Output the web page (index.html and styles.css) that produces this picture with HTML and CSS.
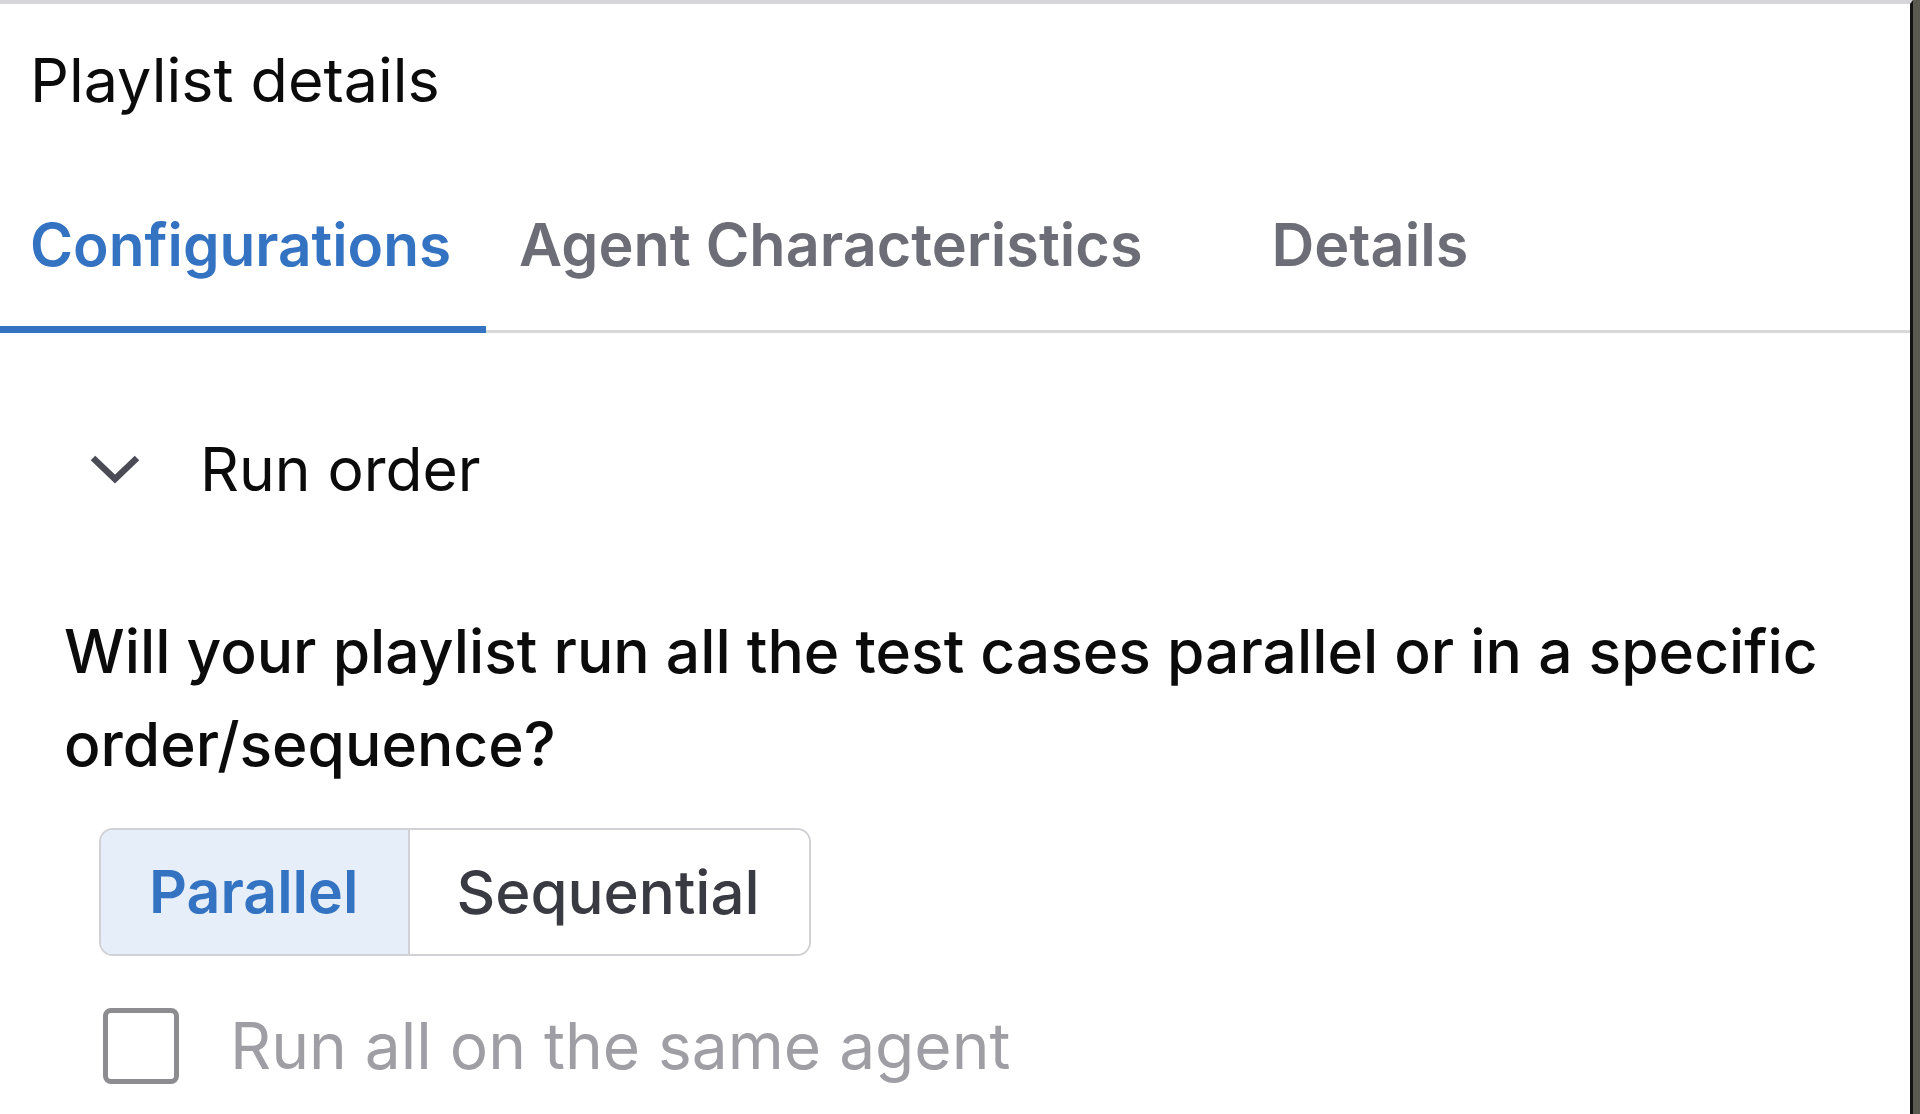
FILE: index.html
```html
<!DOCTYPE html>
<html lang="en">
<head>
<meta charset="utf-8">
<title>Playlist details</title>
<link rel="stylesheet" href="styles.css">
</head>
<body>
<div class="panel">
  <h1 class="title">Playlist details</h1>
  <nav class="tabs">
    <div class="tab tab-active">Configurations</div>
    <div class="tab tab-agent">Agent Characteristics</div>
    <div class="tab">Details</div>
  </nav>
  <section class="section">
    <div class="section-head">
      <svg class="chevron" width="52" height="30" viewBox="0 0 52 30" aria-hidden="true">
        <polyline points="4,4 26,25 48,4" fill="none" stroke="#4a4b55" stroke-width="6.5" stroke-linejoin="miter" stroke-linecap="butt"/>
      </svg>
      <span class="section-title">Run order</span>
    </div>
    <p class="question">Will your playlist run all the test cases parallel or in a specific order/sequence?</p>
    <div class="segmented">
      <div class="segment segment-on">Parallel</div>
      <div class="segment">Sequential</div>
    </div>
    <label class="check-row">
      <span class="checkbox"></span>
      <span class="check-label">Run all on the same agent</span>
    </label>
  </section>
</div>
</body>
</html>
```

FILE: styles.css
```css
* { box-sizing: border-box; }
html, body { margin: 0; padding: 0; }
body {
  background: #5a5a51;
  font-family: Inter, "Noto Sans", "Liberation Sans", sans-serif;
  color: #0b0b0b;
}
.panel {
  width: 1913px;
  min-height: 1114px;
  background: #ffffff;
  border-top: 4px solid #d6d6d8;
  border-right: 3px solid #141414;
  overflow: hidden;
}
.title {
  margin: 0;
  padding: 41px 0 0 30px;
  font-size: 61px;
  line-height: 70px;
  font-weight: 400;
  color: #0b0b0b;
}
.tabs {
  display: flex;
  margin-top: 95px;
  border-bottom: 3px solid #d8d8da;
}
.tab {
  padding: 0 37px 46px 34px;
  font-size: 59.3px;
  line-height: 70px;
  font-weight: 600;
  color: #6c6d76;
  border-bottom: 7px solid transparent;
  margin-bottom: -3px;
}
.tab-active {
  padding-left: 30px;
  padding-right: 35px;
  font-size: 58.5px;
  color: #3472c2;
  border-bottom-color: #3472c2;
}
.tab-agent { padding-left: 33px; padding-right: 95px; }
.section { padding: 0; }
.section-head {
  display: flex;
  align-items: center;
  margin-top: 101px;
  padding-left: 89px;
  height: 70px;
}
.chevron { flex: none; display: block; }
.section-title {
  margin-left: 59px;
  font-size: 60.5px;
  line-height: 70px;
  font-weight: 400;
  color: #0b0b0b;
}
.question {
  margin: 101px 0 0 0;
  padding: 0 10px 0 64px;
  font-size: 60.5px;
  line-height: 93px;
  font-weight: 500;
  color: #0b0b0b;
}
.segmented {
  display: inline-flex;
  margin: 37px 0 0 99px;
  border: 2px solid #d1d1d5;
  border-radius: 14px;
  overflow: hidden;
}
.segment {
  padding: 0 49px 0 46px;
  font-size: 60px;
  line-height: 124px;
  font-weight: 500;
  color: #3a3b42;
  background: #ffffff;
}
.segment + .segment { border-left: 2px solid #d1d1d5; }
.segment-on {
  padding: 0 50px 0 48px;
  background: #e6eef9;
  color: #3472c2;
  font-weight: 600;
  font-size: 59px;
}
.check-row {
  display: flex;
  align-items: center;
  margin: 52px 0 0 103px;
  height: 76px;
}
.checkbox {
  flex: none;
  width: 76px;
  height: 76px;
  border: 5px solid #8c8c91;
  border-radius: 8px;
  background: #ffffff;
}
.check-label {
  margin-left: 51px;
  font-size: 64px;
  line-height: 76px;
  font-weight: 400;
  color: #9e9ea4;
}
```
